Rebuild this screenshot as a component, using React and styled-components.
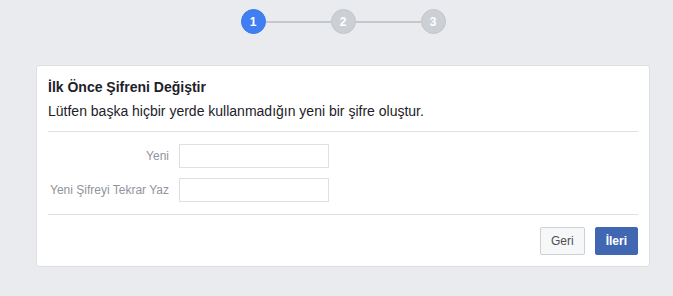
import React from 'react';
import styled, { createGlobalStyle } from 'styled-components';

const GlobalStyle = createGlobalStyle`
  html, body {
    margin: 0;
    padding: 0;
    background: #e9ebee;
    font-family: "Liberation Sans", Arial, Helvetica, sans-serif;
  }
`;

const Page = styled.div`
  width: 614px;
  margin-left: 36px;
  padding-top: 9px;
`;

const Stepper = styled.ol`
  display: flex;
  align-items: center;
  justify-content: center;
  list-style: none;
  margin: 0 0 31px;
  padding: 0;
`;

const Step = styled.li`
  width: 25px;
  height: 25px;
  border-radius: 50%;
  box-sizing: border-box;
  display: flex;
  align-items: center;
  justify-content: center;
  font-size: 12px;
  font-weight: bold;
  color: #fff;
  background: ${props => (props.active ? '#3f7ff2' : '#ccd0d5')};
  border: 1px solid ${props => (props.active ? '#3a77e8' : '#c2c5ca')};
`;

const Connector = styled.li`
  width: 65px;
  height: 2px;
  background: #c4c7cc;
`;

const Card = styled.section`
  background: #fff;
  border: 1px solid #dddfe2;
  border-radius: 3px;
  padding: 12px 11px 11px;
`;

const Title = styled.h2`
  margin: 0 0 6px;
  font-size: 14px;
  line-height: 18px;
  font-weight: bold;
  color: #1d2129;
`;

const Lead = styled.p`
  margin: 0;
  font-size: 14px;
  line-height: 18px;
  color: #1d2129;
`;

const Divider = styled.hr`
  border: 0;
  height: 1px;
  background: #dddfe2;
  margin: ${props => props.top}px 0 ${props => props.bottom}px;
`;

const Form = styled.div`
  display: flex;
  flex-direction: column;
  gap: 10px;
`;

const Row = styled.label`
  display: flex;
  align-items: center;
  gap: 10px;
`;

const Label = styled.span`
  width: 121px;
  text-align: right;
  font-size: 12px;
  color: #90949c;
`;

const Input = styled.input`
  width: 150px;
  height: 24px;
  box-sizing: border-box;
  border: 1px solid #dddfe2;
  border-radius: 0;
  padding: 3px;
  margin: 0;
  font-size: 12px;
  font-family: inherit;
`;

const Footer = styled.div`
  display: flex;
  justify-content: flex-end;
  gap: 10px;
`;

const Button = styled.button`
  height: 28px;
  box-sizing: border-box;
  padding: 0 10px;
  border-radius: 2px;
  font-family: inherit;
  font-size: 12px;
  font-weight: ${props => (props.primary ? 'bold' : 'normal')};
  cursor: pointer;
  border: 1px solid ${props => (props.primary ? '#4267b2' : '#ced0d4')};
  background: ${props => (props.primary ? '#4267b2' : '#f6f7f9')};
  color: ${props => (props.primary ? '#fff' : '#4b4f56')};
`;

export default function App() {
  const steps = [1, 2, 3];
  return (
    <>
      <GlobalStyle />
      <Page>
        <Stepper>
          {steps.map((n, i) => (
            <React.Fragment key={n}>
              {i > 0 && <Connector />}
              <Step active={n === 1}>{n}</Step>
            </React.Fragment>
          ))}
        </Stepper>
        <Card>
          <Title>İlk Önce Şifreni Değiştir</Title>
          <Lead>Lütfen başka hiçbir yerde kullanmadığın yeni bir şifre oluştur.</Lead>
          <Divider top={11} bottom={12} />
          <Form>
            <Row>
              <Label>Yeni</Label>
              <Input type="password" />
            </Row>
            <Row>
              <Label>Yeni Şifreyi Tekrar Yaz</Label>
              <Input type="password" />
            </Row>
          </Form>
          <Divider top={12} bottom={12} />
          <Footer>
            <Button>Geri</Button>
            <Button primary>İleri</Button>
          </Footer>
        </Card>
      </Page>
    </>
  );
}
